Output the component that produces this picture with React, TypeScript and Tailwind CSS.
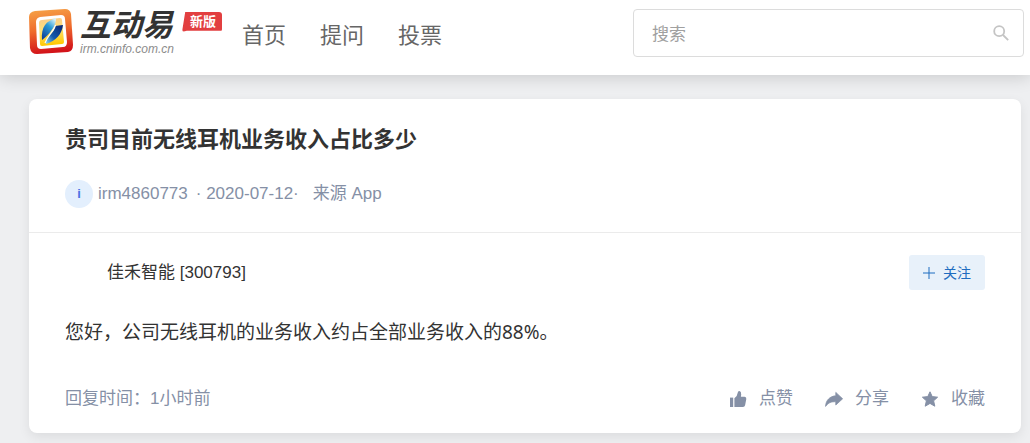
import React from "react";

function LogoMark() {
  return (
    <svg viewBox="0 0 46 46" className="h-[46px] w-[46px] shrink-0" aria-hidden="true">
      <defs>
        <linearGradient id="frame" x1="0" y1="0" x2="0.15" y2="1">
          <stop offset="0" stopColor="#f6a548" />
          <stop offset="0.5" stopColor="#ef6c2c" />
          <stop offset="1" stopColor="#d3141a" />
        </linearGradient>
        <linearGradient id="core" x1="0" y1="0" x2="0.1" y2="1">
          <stop offset="0" stopColor="#fbc98a" />
          <stop offset="0.45" stopColor="#fde27a" />
          <stop offset="1" stopColor="#ffc800" />
        </linearGradient>
        <linearGradient id="leaf" x1="0.8" y1="0" x2="0.2" y2="1">
          <stop offset="0" stopColor="#d8f3fa" />
          <stop offset="0.4" stopColor="#2a9bd6" />
          <stop offset="1" stopColor="#0c3f98" />
        </linearGradient>
        <linearGradient id="leafBack" x1="1" y1="0" x2="0" y2="1">
          <stop offset="0" stopColor="#0a2470" />
          <stop offset="0.6" stopColor="#1459ac" />
          <stop offset="1" stopColor="#8fdcf2" />
        </linearGradient>
      </defs>
      <path d="M7 3 L37 1 Q42 1 43 6 L45 37 Q45 43 40 44 L9 46 Q3 46 2 40 L1 9 Q1 4 7 3Z" fill="url(#frame)" />
      <path d="M12 9 L33 7 Q37 7 37 11 L39 34 Q39 39 35 39 L13 41 Q9 41 9 37 L8 14 Q8 10 12 9Z" fill="#fff" />
      <path d="M14 12 L32 10 Q34 10 34 12 L36 34 Q36 36 34 36 L14 38 Q12 38 12 36 L11 15 Q11 12 14 12Z" fill="url(#core)" />
      <path d="M28 10 C18 13 13 19 14 32 C18 29 21 26 23 23 C26 19 28 16 28 10Z" fill="url(#leaf)" />
      <path d="M27 18 L35 17 C34 26 28 33 18 36 C17 32 20 29 23 26 C25 24 27 21 27 18Z" fill="url(#leafBack)" />
      <path d="M27.5 17 C26 23 20 27 17 35" fill="none" stroke="#fff" strokeWidth="1.2" />
    </svg>
  );
}

function SearchIcon() {
  return (
    <svg viewBox="0 0 16 16" className="h-4 w-4" fill="none" stroke="#c4c4c4" strokeWidth="1.8" aria-hidden="true">
      <circle cx="6.2" cy="6.2" r="5" />
      <path d="M10 10 L15.2 15.2" />
    </svg>
  );
}

const actions = [
  {
    label: "点赞",
    icon: (
      <>
        <path d="M1 7.6h3.2v9.4H1z" />
        <path d="M5.4 17V8.2Q8.4 6.4 8.8 2.6 9 .8 10.4 1 12.4 1.4 12.2 4.4L11.9 6.8H15.6Q17.6 7 17.3 9L16.1 15.2Q15.7 17 14 17Z" />
      </>
    ),
  },
  {
    label: "分享",
    icon: (
      <path
        d="M10.8 2.4 17.6 8.8 10.8 15V11.8C6.6 11.4 3.2 12.6 .6 16.4 .8 10.4 4.8 6.2 10.8 5.8Z"
        stroke="#8590a6"
        strokeWidth="0.8"
        strokeLinejoin="round"
      />
    ),
  },
  {
    label: "收藏",
    icon: (
      <path
        d="M9 1.8 11.2 6.6 16.6 7.2 12.6 10.8 13.8 16.2 9 13.4 4.2 16.2 5.4 10.8 1.4 7.2 6.8 6.6Z"
        stroke="#8590a6"
        strokeWidth="1"
        strokeLinejoin="round"
      />
    ),
  },
];

export default function App() {
  return (
    <div className="min-h-screen bg-[#eeeff1] font-['Liberation_Sans','Noto_Sans_CJK_SC',sans-serif] text-[17px] leading-6 text-[#333]">
      <header className="flex h-[75px] items-start bg-white pr-1.5 pl-7 shadow-[0_2px_16px_rgba(0,0,0,0.16)]">
        <a href="#home" className="flex pt-2">
          <LogoMark />
          <span className="flex w-[98px] flex-col pl-1.5 italic">
            <span className="text-[31px] leading-9 font-bold whitespace-nowrap">互动易</span>
            <span className="text-[12px] leading-[10px] text-[#8c8c8c]">irm.cninfo.com.cn</span>
          </span>
        </a>
        <span className="mt-3 ml-2.5 h-5 w-10 rounded-[3px] bg-[#e23f40] pl-2 text-[13px] leading-5 font-bold whitespace-nowrap text-white [clip-path:polygon(8%_0,100%_0,100%_94%,12%_94%,0_100%)]">
          新版
        </span>
        <nav className="ml-5 flex gap-[34px] pt-5 text-[22px] leading-8 whitespace-nowrap text-[#666]">
          <a href="#home">首页</a>
          <a href="#ask">提问</a>
          <a href="#vote">投票</a>
        </nav>
        <form role="search" className="mt-[9px] ml-auto flex h-12 w-[391px] items-center rounded border border-[#dcdcdc] pr-3.5 pl-[18px]">
          <input
            type="search"
            aria-label="搜索"
            placeholder="搜索"
            className="min-w-0 flex-1 bg-transparent pt-1 outline-none placeholder:text-[#a0a0a0]"
          />
          <button type="button" aria-label="搜索">
            <SearchIcon />
          </button>
        </form>
      </header>

      <main className="relative pt-6 pr-[9px] pb-2.5 pl-[29px]">
        <article className="rounded-lg bg-white shadow-[0_4px_12px_rgba(0,0,0,0.08)]">
          <section className="border-b border-[#ebebeb] px-9 pt-[25px] pb-6">
            <h1 className="text-[22px] leading-8 font-bold">贵司目前无线耳机业务收入占比多少</h1>
            <div className="mt-6 flex h-7 items-center text-[#8590a6]">
              <span className="flex h-7 w-7 items-center justify-center rounded-full bg-[#e3effd] text-[13px] font-bold text-[#4a6fe3]">
                i
              </span>
              <span className="ml-[5px]">irm4860773</span>
              <span className="ml-2">· 2020-07-12·</span>
              <span className="ml-3.5">来源 App</span>
            </div>
          </section>
          <section className="px-9 pt-[22px] pb-[22px]">
            <div className="flex h-[35px] items-center justify-between">
              <h2 className="pl-[42px]">佳禾智能 [300793]</h2>
              <button type="button" className="flex h-[35px] w-[76px] items-center justify-center gap-2 rounded-[3px] bg-[#e8f1fa] text-[14px] text-[#1d6cc0]">
                <svg viewBox="0 0 12 12" className="h-3 w-3" stroke="currentColor" aria-hidden="true">
                  <path d="M6 0V12M0 6H12" />
                </svg>
                关注
              </button>
            </div>
            <p className="mt-7 font-['Noto_Sans','Noto_Sans_CJK_SC',sans-serif] text-[19px] leading-7">
              您好，公司无线耳机的业务收入约占全部业务收入的88%。
            </p>
            <footer className="mt-[41px] flex items-center justify-between text-[#8590a6]">
              <span>回复时间：1小时前</span>
              <div className="flex gap-8">
                {actions.map((action) => (
                  <button key={action.label} type="button" className="flex items-center gap-3">
                    <svg viewBox="0 0 18 18" className="h-[18px] w-[18px]" fill="currentColor" aria-hidden="true">
                      {action.icon}
                    </svg>
                    {action.label}
                  </button>
                ))}
              </div>
            </footer>
          </section>
        </article>
      </main>
    </div>
  );
}
